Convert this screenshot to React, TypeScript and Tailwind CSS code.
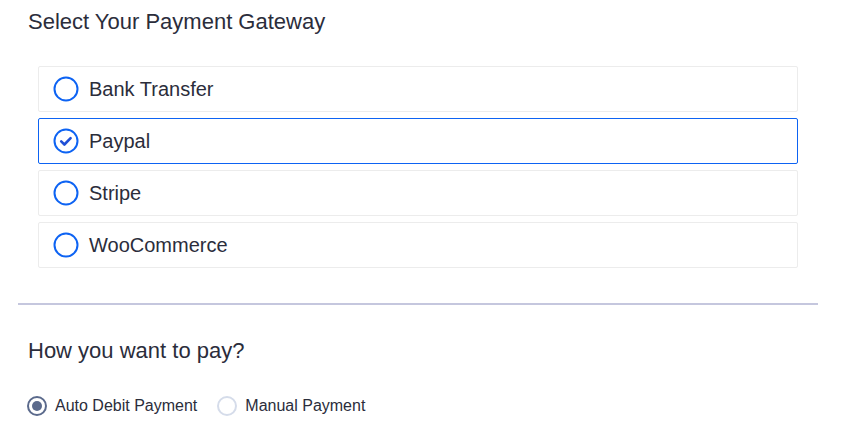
import { useState } from "react";

const gateways = ["Bank Transfer", "Paypal", "Stripe", "WooCommerce"];

function RingIcon({ checked }: { checked: boolean }) {
  return (
    <svg width="26" height="26" viewBox="0 0 26 26" className="shrink-0">
      <circle cx="13" cy="13" r="11.5" fill="none" stroke="#0d63f3" strokeWidth="2" />
      {checked && (
        <path d="M8.2 13.4l3.2 3.1 6.2-6.4" fill="none" stroke="#1f4fd6" strokeWidth="2.6" strokeLinecap="round" strokeLinejoin="round" />
      )}
    </svg>
  );
}

function PayRadio({ checked, label }: { checked: boolean; label: string }) {
  return (
    <label className="flex items-center gap-2">
      {checked ? (
        <span className="grid h-[20px] w-[20px] place-items-center rounded-full border-[2px] border-[#5b6a8c] bg-white">
          <span className="h-[10px] w-[10px] rounded-full bg-[#5b6a8c]" />
        </span>
      ) : (
        <span className="h-[20px] w-[20px] rounded-full border-[2px] border-[#d5dcea] bg-white" />
      )}
      <span className="text-[16px] text-[#2b2d3b]">{label}</span>
    </label>
  );
}

export default function App() {
  const [selected, setSelected] = useState("Paypal");

  return (
    <div className="min-h-[432px] w-[845px] bg-white font-['Liberation_Sans',Arial,sans-serif] text-[#2b2d3b]">
      <div className="w-[818px] pl-[18px] pt-[9px]">
        <h2 className="pl-[10px] text-[22px] leading-[26px]">Select Your Payment Gateway</h2>

        <div className="mt-[31px] flex flex-col gap-[6px] px-[20px]">
          {gateways.map((g) => {
            const on = g === selected;
            return (
              <button
                key={g}
                onClick={() => setSelected(g)}
                className={`flex h-[46px] w-[760px] items-center gap-[10px] rounded-[2px] border pl-[14px] text-left ${
                  on ? "border-[#0d63f3]" : "border-[#ececec]"
                }`}
              >
                <RingIcon checked={on} />
                <span className="text-[20px]">{g}</span>
              </button>
            );
          })}
        </div>

        <hr className="mt-[35px] h-[2px] border-0 bg-[#c5c7de]" />

        <h2 className="mt-[33px] pl-[10px] text-[22px] leading-[26px]">How you want to pay?</h2>

        <div className="mt-[30px] flex items-center gap-[20px] pl-[9px]">
          <PayRadio checked label="Auto Debit Payment" />
          <PayRadio checked={false} label="Manual Payment" />
        </div>
      </div>
    </div>
  );
}
